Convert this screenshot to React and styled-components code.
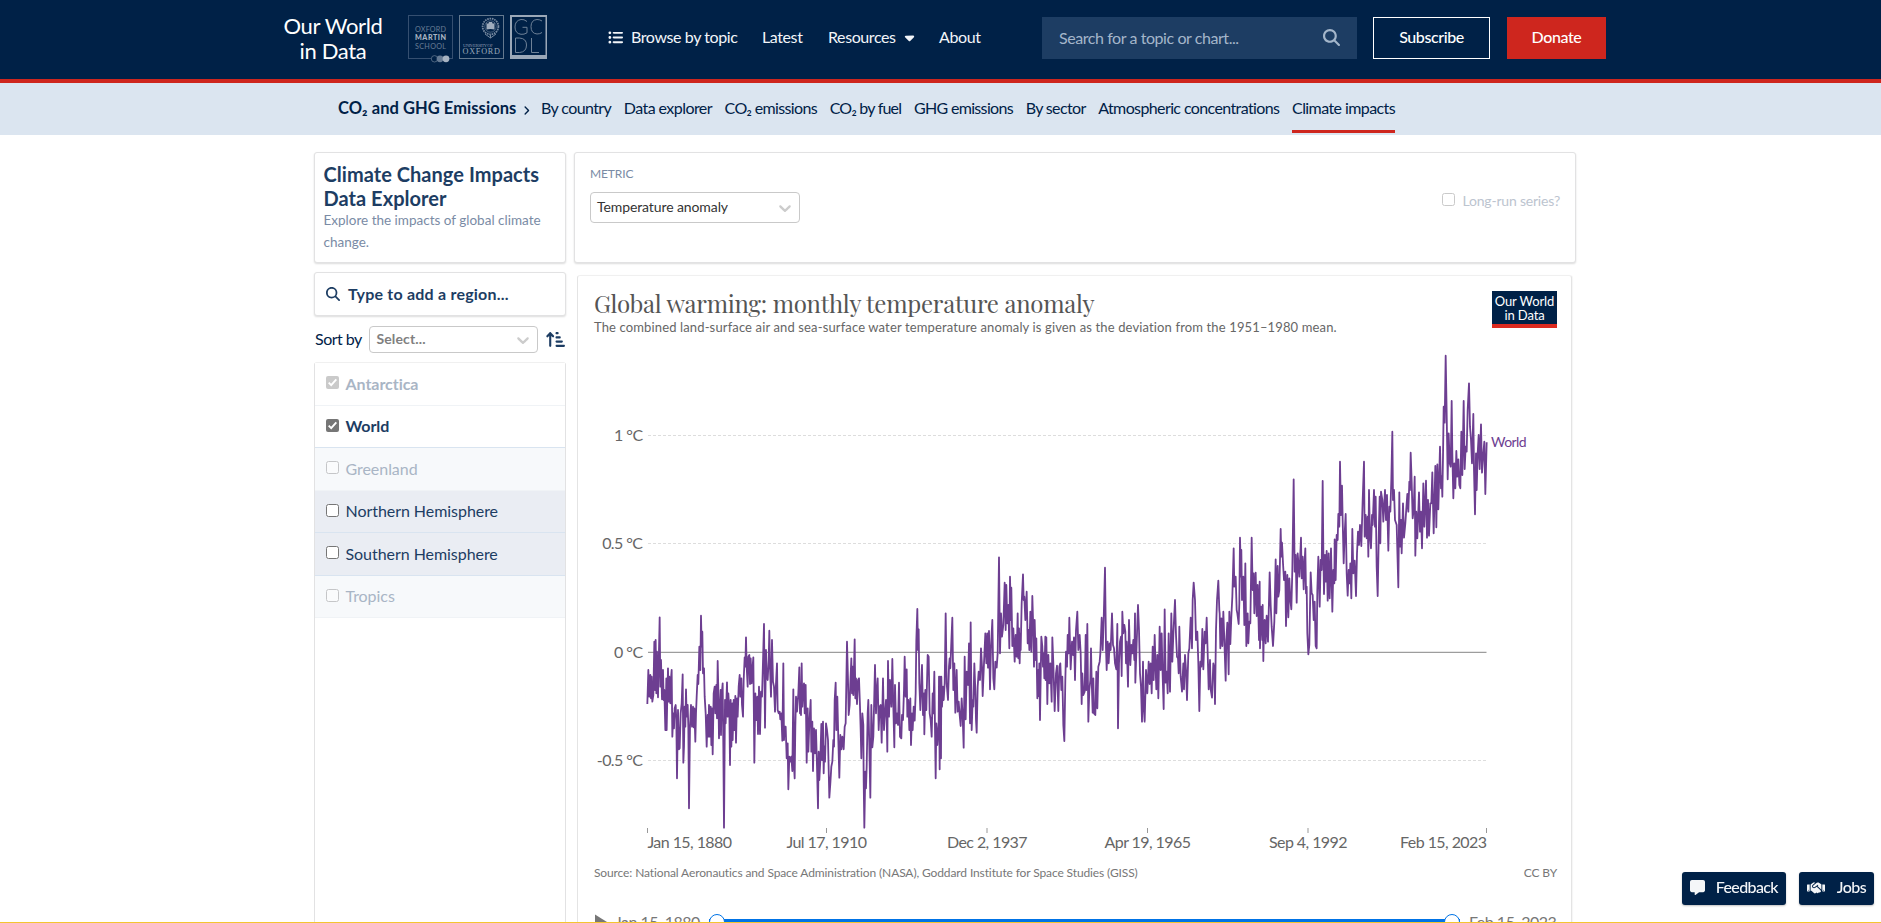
import React from "react";
import styled, { createGlobalStyle, css } from "styled-components";
import {
  FaListUl,
  FaCaretDown,
  FaMagnifyingGlass,
  FaAngleRight,
  FaArrowUpShortWide,
  FaMessage,
  FaHandshake,
} from "react-icons/fa6";

const GlobalStyle = createGlobalStyle`
  *, *::before, *::after { box-sizing: border-box; }
  body {
    margin: 0;
    height: 923px;
    overflow: hidden;
    background: #fff;
    color: #002147;
    font-family: Lato, "Liberation Sans", sans-serif;
    font-size: 16px;
  }
`;

const Page = styled.div`
  height: 923px;
  overflow: hidden;
`;

/* ---------- header ---------- */

const Header = styled.header`
  height: 83px;
  padding: 0 275px 0 283px;
  display: flex;
  align-items: flex-start;
  background: #002147;
  border-bottom: 4px solid #ce261e;
  color: #fff;
`;

const SiteLogo = styled.div`
  width: 100px;
  margin-top: 13px;
  text-align: center;
  font-size: 22px;
  line-height: 25px;
  letter-spacing: -0.35px;
  white-space: nowrap;
`;

const Partners = styled.svg`
  display: block;
  margin: 13px 0 0 24px;
  flex: none;
`;

const MainNav = styled.nav`
  display: flex;
  align-items: center;
  height: 40px;
  margin: 17px 0 0 60px;
  line-height: 20px;
  letter-spacing: -0.4px;
  color: #f2f5f9;
`;

const MainLink = styled.a`
  display: flex;
  align-items: center;
  width: ${(p) => p.$width}px;
  white-space: nowrap;
  svg { flex: none; }
`;

const ListIcon = styled(FaListUl)`
  margin-right: 8px;
`;

const CaretIcon = styled(FaCaretDown)`
  margin-left: 6px;
`;

const SearchBox = styled.div`
  display: flex;
  align-items: center;
  justify-content: space-between;
  width: 315px;
  height: 42px;
  margin: 17px 16px 0 auto;
  padding: 0 17px 2px 17px;
  background: #1d3d63;
  color: #a4b6ca;
  letter-spacing: -0.43px;
`;

const HeaderButton = styled.button`
  width: ${(p) => p.$width}px;
  height: 42px;
  margin: 17px 0 0 ${(p) => p.$gap}px;
  padding: 0 0 3px;
  border: 1px solid ${(p) => (p.$filled ? "#ce261e" : "#fff")};
  background: ${(p) => (p.$filled ? "#ce261e" : "transparent")};
  color: #fff;
  font: 500 16px Lato, sans-serif;
  letter-spacing: -0.4px;
`;

/* ---------- topic navigation ---------- */

const TopicNav = styled.nav`
  display: flex;
  align-items: stretch;
  height: 52px;
  padding-left: 338px;
  background: #dbe5f0;
  line-height: 50px;
`;

const TopicTitle = styled.div`
  display: flex;
  align-items: center;
  width: 203px;
  height: 50px;
  font-size: 16.5px;
  font-weight: 700;
  letter-spacing: 0.05px;
  white-space: nowrap;
  svg { margin: 4px 0 0 5px; }
`;

const TopicLink = styled.a`
  margin-right: 12.65px;
  height: 50px;
  font-size: 16px;
  letter-spacing: ${(p) => p.$track}px;
  white-space: nowrap;
  border-bottom: 3px solid ${(p) => (p.$active ? "#ce261e" : "transparent")};
`;

/* ---------- explorer ---------- */

const Explorer = styled.main`
  display: grid;
  grid-template-columns: 252px 1002px;
  grid-template-rows: 111px 1fr;
  column-gap: 8px;
  row-gap: 9px;
  height: 788px;
  padding: 17px 0 0 314px;
`;

const card = css`
  background: #fff;
  border: 1px solid #e2e2e3;
  border-radius: 3px;
  box-shadow: 0 1px 2px rgba(0, 0, 0, 0.14);
`;

const TitleCard = styled.section`
  ${card}
  padding: 9px 8.5px;
`;

const ExplorerTitle = styled.h1`
  margin: 0;
  color: #1d3d63;
  font-size: 20px;
  font-weight: 700;
  line-height: 24px;
  letter-spacing: 0.04px;
  white-space: nowrap;
`;

const ExplorerSubtitle = styled.p`
  margin: -1px 0 0;
  color: #7a8ba5;
  font-size: 13.5px;
  line-height: 22px;
`;

const MetricCard = styled.section`
  ${card}
  display: flex;
  justify-content: space-between;
  padding: 13px 15px;
`;

const MetricLabel = styled.div`
  color: #7a8ba5;
  font-size: 12px;
  line-height: 16px;
  letter-spacing: -0.1px;
`;

const Select = styled.div`
  display: flex;
  align-items: center;
  justify-content: space-between;
  width: ${(p) => p.$width}px;
  height: ${(p) => p.$height}px;
  padding: 0 4px 0 6px;
  border: 1px solid #c9c9c9;
  border-radius: 4px;
  color: ${(p) => (p.$placeholder ? "#808080" : "#333")};
  font-size: 14px;
  font-weight: ${(p) => (p.$placeholder ? 700 : 400)};
  letter-spacing: ${(p) => (p.$placeholder ? 0.15 : -0.1)}px;
  span { padding-bottom: 2px; }
`;

const MetricSelect = styled(Select)`
  margin-top: 10px;
`;

const LongRun = styled.label`
  display: flex;
  align-items: center;
  gap: 8px;
  height: 20px;
  margin-top: 23px;
  color: #bcc4cf;
  font-size: 14px;
  letter-spacing: -0.2px;
  span { padding-top: 2px; }
`;

const Checkbox = styled.svg`
  display: block;
  flex: none;
  opacity: ${(p) => (p.$faded ? 0.38 : 1)};
`;

const Sidebar = styled.aside`
  display: flex;
  flex-direction: column;
  color: #1d3d63;
`;

const RegionSearch = styled.div`
  ${card}
  display: flex;
  align-items: center;
  gap: 8px;
  height: 44px;
  padding: 0 11px;
  font-size: 16px;
  font-weight: 700;
  letter-spacing: 0.22px;
  span { padding-bottom: 2px; }
`;

const SortRow = styled.div`
  display: flex;
  align-items: center;
  justify-content: space-between;
  height: 27px;
  margin: 10px 0 9px;
  padding: 0 1px;
  color: #002147;
`;

const SortLabel = styled.span`
  padding-bottom: 2px;
  letter-spacing: -0.5px;
`;

const RegionList = styled.ul`
  flex: 1;
  margin: 0;
  padding: 0;
  list-style: none;
  border: 1px solid #e2e2e3;
  border-top-color: #f0f0f0;
  border-radius: 3px 3px 0 0;
`;

const RegionRow = styled.li`
  display: flex;
  align-items: center;
  gap: 6.5px;
  height: 42.5px;
  padding-left: 11px;
  padding-bottom: 2px;
  background: ${(p) => (p.$on ? "#fff" : p.$off ? "#f7f9fb" : "#eaedf3")};
  border-bottom: 1px solid ${(p) => (p.$off ? "#f0f3f6" : "#d9e4f0")};
  color: ${(p) => (p.$off ? "#a9b5c5" : "#1d3d63")};
  font-weight: ${(p) => (p.$on ? 700 : 400)};
  letter-spacing: -0.05px;
  span { padding-top: 1px; }
`;

/* ---------- chart card ---------- */

const ChartCard = styled.section`
  display: flex;
  flex-direction: column;
  width: 995px;
  margin: 3px 0 0 3px;
  border: 1px solid #e4e4e4;
  border-top-color: #f0f0f0;
  border-bottom: 0;
  border-radius: 3px 3px 0 0;
  box-shadow: 1px 0 1px rgba(0, 0, 0, 0.04);
`;

const ChartHeader = styled.div`
  display: flex;
  justify-content: space-between;
  height: 74px;
  padding: 15px 14px 0 16px;
`;

const ChartTitle = styled.h2`
  margin: -3px 0 0;
  color: #555;
  font: 400 24px/30px "Playfair Display", "Liberation Serif", serif;
  letter-spacing: -0.25px;
  white-space: nowrap;
`;

const ChartSubtitle = styled.p`
  margin: 1px 0 0;
  color: #666;
  font-size: 13px;
  letter-spacing: 0.135px;
  line-height: 17px;
  white-space: nowrap;
`;

const ChartLogo = styled.div`
  width: 65px;
  height: 37px;
  padding-top: 3px;
  background: #002147;
  border-bottom: 4px solid #dc2a20;
  color: #fff;
  font-size: 13px;
  letter-spacing: -0.1px;
  line-height: 14px;
  text-align: center;
`;

const Plot = styled.svg`
  display: block;
  flex: none;
  font-family: Lato, sans-serif;
  letter-spacing: -0.57px;
`;

const SourceRow = styled.div`
  display: flex;
  justify-content: space-between;
  height: 51px;
  padding: 6px 14px 0 16px;
  color: #777;
  font-size: 12px;
  line-height: 18px;
  letter-spacing: -0.12px;
`;

const Timeline = styled.div`
  display: flex;
  align-items: center;
  height: 26px;
  padding: 0 15px 0 15px;
  color: #777;
  line-height: 20px;
  letter-spacing: -0.5px;
  white-space: nowrap;
`;

const TimelineDate = styled.span`
  width: ${(p) => p.$width}px;
  margin-left: ${(p) => p.$gap}px;
`;

const Track = styled.div`
  display: flex;
  align-items: center;
  justify-content: space-between;
  width: 752px;
  height: 16px;
  margin-left: 5px;
  background: linear-gradient(#0073e6, #0073e6) center / 100% 6px no-repeat;
`;

const Handle = styled.i`
  width: 16px;
  height: 16px;
  border: 1px solid #0073e6;
  border-radius: 50%;
  background: #fff;
`;

/* ---------- floating tools ---------- */

const SiteTools = styled.div`
  position: fixed;
  right: 7px;
  bottom: 18px;
  display: flex;
  gap: 13px;
`;

const ToolButton = styled.button`
  display: flex;
  align-items: center;
  justify-content: space-between;
  width: ${(p) => p.$width}px;
  height: 33px;
  padding: 0 8px 2px;
  border: 0;
  border-radius: 3px;
  background: #002147;
  box-shadow: 0 1px 2px rgba(0, 0, 0, 0.25);
  color: #f4f6f8;
  font: 500 16px Lato, sans-serif;
  letter-spacing: -0.6px;
  span { padding-bottom: 2px; }
`;

const NoticeEdge = styled.div`
  position: fixed;
  left: 0;
  right: 0;
  bottom: 0;
  height: 1px;
  background: #f4c430;
`;

const Chevron = () => (
  <svg width="20" height="20" viewBox="0 0 20 20" fill="#ccc">
    <path d="M4.516 7.548c0.436-0.446 1.043-0.481 1.576 0l3.908 3.747 3.908-3.747c0.533-0.481 1.141-0.446 1.574 0 0.436 0.445 0.408 1.197 0 1.615-0.406 0.418-4.695 4.502-4.695 4.502-0.217 0.223-0.502 0.335-0.787 0.335s-0.57-0.112-0.789-0.335c0 0-4.287-4.084-4.695-4.502s-0.436-1.17 0-1.615z" />
  </svg>
);

const Check = ({ checked, faded }) => (
  <Checkbox $faded={faded} width="13" height="13" viewBox="0 0 13 13">
    {checked ? (
      <>
        <rect width="13" height="13" rx="2" fill="#767676" />
        <path d="M2.7 6.7 5.2 9.2 10.3 3.4" fill="none" stroke="#fff" strokeWidth="1.9" />
      </>
    ) : (
      <rect x="0.5" y="0.5" width="12" height="12" rx="2" fill="#fff" stroke="#767676" />
    )}
  </Checkbox>
);

const PartnerLogos = () => (
  <Partners width="141" height="52" viewBox="407 13 141 52" fontFamily="Lato, sans-serif">
    <rect x="408.5" y="15.5" width="44" height="43" fill="none" stroke="#354f70" />
    <g fill="#687d95" fontSize="7.2">
      <text x="415" y="31.5" textLength="31">OXFORD</text>
      <text x="415" y="39.7" textLength="31" fontWeight="900" fill="#a9b5c3">MARTIN</text>
      <text x="415" y="48.5" textLength="31">SCHOOL</text>
    </g>
    <circle cx="434.5" cy="58.8" r="3.2" fill="#002147" stroke="#6b7f97" strokeWidth="0.7" />
    <circle cx="440" cy="58.8" r="3.4" fill="#667b94" />
    <circle cx="446" cy="58.8" r="3.4" fill="#a7b3c2" />
    <rect x="459.5" y="15.5" width="44" height="43" fill="none" stroke="#64798f" />
    <g fill="none" stroke="#75889f">
      <circle cx="490.5" cy="26.5" r="7.9" strokeWidth="1.8" strokeDasharray="1.6 0.8" />
      <circle cx="490.5" cy="26.5" r="5.7" strokeWidth="0.6" />
      <path d="M485 34l5.500 4 5.500-4M490.500 35v3" strokeWidth="1" />
    </g>
    <path d="M486.5 22.5l1.5 1.5 1-2h3l1 2 1.500-1.500v7q-4-1-8 0z" fill="#a0adbd" />
    <g fill="#8293a8" fontFamily="Liberation Serif, serif">
      <text x="463" y="46.8" fontSize="4.8" textLength="30">UNIVERSITY OF</text>
      <text x="462.500" y="54" fontSize="8.2" textLength="37.500" fill="#9aa8b8">OXFORD</text>
    </g>
    <path d="M510 15h37v44h-37zM512 17v38h33.500v-38z" fill="#9ba8b8" fillRule="evenodd" />
    <g fill="none" stroke="#6f8298" strokeWidth="1">
      <path d="M527 21.500q-3-2.500-6-2-6 1-6 7.500t6 7.300q3 .4 6-1.500v-5.500h-4.500" />
      <path d="M542 21q-2-1.500-5-1.500-6 .5-6 7.200t6 7.300q3 0 5-1.500" />
      <path d="M515.500 38v14.500h4q7-.5 7-7.500 0-6.500-7-7zM531.500 38v14.500h7.500" />
    </g>
  </Partners>
);

/* Monthly series, kept in four runs, each with its own origin in the plot and three units to a pixel. */
const runs = [
  {
    x: 640,
    y: 580,
    points:
      "22,372 25,270 28,350 31,285 33,355 35,290 37,365 40,345 43,185 45,330 47,180 49,340 51,215 54,352 59,112 61,320 63,240 66,358 69,270 71,360 73,330 76,450 79,295 80,450 82,350 84,265 86,365 88,290 91,370 93,295 95,270 97,470 100,400 102,445 104,385 107,375 109,420 111,595 114,390 117,508 119,505 122,400 125,370 128,283 130,548 132,500 134,380 136,440 138,328 140,410 143,375 145,440 147,685 150,440 153,375 156,440 159,380 161,442 163,385 166,485 168,400 170,350 173,285 175,312 178,200 181,270 183,107 185,200 187,155 189,280 192,265 194,350 197,400 200,500 203,405 205,470 207,375 209,470 212,380 214,495 216,385 218,523 221,340 224,320 226,400 229,315 231,415 233,243 235,330 237,475 239,400 242,330 243,465 245,345 248,310 250,500 252,743 255,360 257,430 261,307 263,410 265,340 268,390 270,555 272,360 274,500 277,370 278,480 281,360 283,450 286,348 288,488 291,355 293,410 296,320 299,285 301,350 304,295 306,375 309,410 311,300 314,232 316,260 318,172 320,260 323,320 325,230 328,225 330,312 332,235 335,310 337,270 340,232 343,548 346,340 349,420 352,350 354,462 357,320 360,462 363,335 366,350 368,280 372,132 375,443 378,210 380,290 383,300 386,240 388,152 390,260 393,350 396,180 399,305 402,320 405,395 408,310 411,250 413,390 416,400 419,395 421,418 424,400 427,482 430,250 432,480 434,440 437,440 440,535 443,490 445,628 448,530 451,545 454,530 457,573 460,328 462,560 464,595 466,440 468,350 471,395 475,340 478,262 480,400 482,310 483,405 485,250 487,380 489,330 492,310 494,400 497,315 500,548 503,385 505,515 508,430 512,360 514,515 517,425 519,573 522,445 525,520 528,450 531,560 534,685 536,515 538,600 541,540 544,432 546,540 549,425 551,580 553,500 555,545 558,430 561,450 564,480 568,653 571,610 574,560 577,545 580,480 582,500 584,360 587,308 589,450 592,350 595,480 598,593 601,465 604,508 607,470 611,508 614,440 617,430 621,185 624,300 626,405 629,375 631,310 634,235 636,340 638,260 640,345 644,178 646,355 648,295 651,372 654,300 657,295 660,380 662,450 664,535 667,400 670,435 671,600 673,743 676,575 678,625 680,560 683,400 685,360 688,500 691,653 694,375 697,502 700,470 702,385 705,255 708,400 710,340 713,295 716,450 719,380 722,375 725,488 729,295 732,450 735,400 738,360 740,410 742,515 744,243 747,410 750,300 754,380 757,237 760,380 763,502 765,315 768,430 771,400 774,435 777,308 780,470 784,475 786,405 789,420 792,330 794,230 797,350 800,268 802,410 805,360 808,450 811,355 813,495 816,400 818,450 821,380 824,422 827,340 829,180 832,87 834,210 836,148 838,310 841,390 846,255 849,405 852,340 853,463 856,330 859,390 863,225 866,230 869,400 872,420 875,470 878,340 880,400 883,275 885,450 887,595 889,430 892,495 896,430 897,290 899,568",
  },
  {
    x: 920,
    y: 520,
    points:
      "60,470 63,715 64,470 66,560 69,500 71,540 74,490 77,280 80,490 84,540 87,440 89,415 91,445 94,365 97,293 100,510 103,430 106,578 110,450 113,575 116,545 119,585 122,618 125,535 128,590 131,683 134,410 137,598 140,455 144,495 147,370 150,610 152,307 155,630 158,540 160,560 163,430 166,510 168,600 170,638 173,500 176,455 180,480 183,385 186,440 188,528 192,430 196,340 199,430 202,340 204,443 207,333 210,508 213,380 217,300 220,475 223,508 226,425 230,443 233,400 237,112 240,400 243,280 246,350 250,315 254,188 257,330 259,195 262,310 265,255 268,385 270,170 273,300 274,203 277,378 280,325 284,425 287,345 290,410 293,280 295,415 297,325 299,430 301,340 302,390 305,250 309,163 311,240 313,230 316,300 320,215 323,370 326,330 328,390 331,275 334,395 337,228 340,330 342,440 344,300 347,420 349,355 352,535 355,450 356,528 358,430 360,600 364,350 367,380 369,440 371,400 373,475 376,350 377,480 379,352 382,552 385,405 388,490 391,430 395,545 397,352 400,430 404,573 408,460 411,437 415,573 418,440 421,430 424,510 427,470 430,615 433,663 436,480 438,395 441,440 443,345 446,400 448,293 452,448 456,365 459,405 462,352 465,480 468,330 472,275 475,390 479,345 482,400 485,552 487,460 490,525 494,515 497,345 499,510 502,312 505,605 508,510 511,480 513,385 515,480 518,578 520,475 522,580 526,585 529,455 532,565 535,440 539,425 541,400 545,293 548,390 551,300 555,143 558,385 560,450 563,365 566,430 569,370 572,390 576,280 579,375 582,385 585,430 589,448 592,312 594,625 597,430 600,365 603,350 605,468 607,275 610,340 613,315 616,335 618,430 620,365 624,500 627,300 631,435 634,375 637,400 640,360 643,420 645,280 646,488 650,370 654,255 657,330 660,460 663,500 666,605 669,425 671,560 674,605 678,450 682,520 686,425 689,492 692,430 695,520 698,380 701,480 704,345 707,450 709,508 712,405 715,535 719,320 722,450 725,340 727,435 731,567 734,268 737,488 740,455 743,520 746,340 750,515 754,280 757,425 760,345 765,240 768,345 771,410 774,415 776,460 778,320 782,470 786,515 790,430 792,508 795,405 798,450 801,540 805,400 808,385 812,293 816,385 818,240 821,188 825,240 828,360 832,335 835,430 838,573 841,425 844,440 847,327 850,448 854,335 857,370 860,293 863,400 866,508 870,420 872,508 876,533 880,430 883,445 885,552 888,330 891,240 895,182 898,270",
  },
  {
    x: 1180,
    y: 440,
    points:
      "119,520 121,625 124,535 127,618 130,515 133,600 137,722 139,600 142,548 146,703 148,515 151,612 154,530 157,470 161,325 163,440 167,410 170,510 172,520 176,552 178,490 180,293 183,410 184,330 186,480 190,410 193,555 196,370 199,618 203,520 205,610 208,545 211,550 215,293 218,450 221,400 223,520 227,398 230,528 233,435 237,600 239,425 240,625 243,500 247,600 248,495 250,663 252,560 254,540 257,610 260,527 264,605 269,397 272,495 275,560 279,618 283,545 287,358 289,520 293,378 295,470 298,450 302,267 304,350 306,308 309,370 312,420 316,395 318,558 322,405 325,532 328,415 331,480 334,508 337,390 341,118 344,395 347,345 350,488 353,340 356,380 358,410 363,293 365,415 368,350 371,448 374,360 376,325 378,460 380,440 382,580 385,643 388,615 392,397 395,460 398,465 401,540 404,485 407,618 410,625 412,450 415,350 419,500 422,360 425,390 428,123 430,330 432,462 435,345 438,425 440,333 443,482 446,340 449,475 453,325 457,515 460,390 463,430 464,298 467,420 470,285 473,300 475,222 478,260 480,65 483,225 486,137 488,240 491,370 494,280 497,222 500,400 503,467 506,390 509,430 511,370 514,475 517,267 520,400 524,362 528,468 531,340 534,275 537,315 540,255 544,318 548,180 552,65 554,290 557,225 560,295 563,230 565,350 567,150 570,290 573,325 576,225 578,255 582,150 585,260 587,170 590,380 593,468 597,250 599,170 601,310 603,155 607,180 610,245 615,150 618,240 621,165 625,332 628,200 631,215 634,120",
  },
  {
    x: 1340,
    y: 270,
    points:
      "157,485 159,690 162,660 165,750 170,765 172,840 175,952 178,667 180,830 183,750 185,850 189,700 192,803 196,760 198,730 202,672 205,725 208,635 210,660 212,548 215,635 218,745 221,720 224,620 226,857 229,725 232,805 237,667 240,785 243,725 246,835 250,640 253,770 258,632 261,803 264,690 267,797 271,700 274,700 277,607 281,790 286,588 289,772 292,583 295,718 300,530 303,655 305,620 307,680 309,560 311,410 314,458 317,257 320,430 323,628 326,490 329,580 332,590 335,393 337,550 340,685 343,580 346,655 349,543 352,620 355,568 358,645 361,655 364,485 367,615 371,393 374,597 377,530 380,545 383,420 387,340 390,470 393,510 396,580 400,432 402,600 405,733 408,550 410,660 413,550 416,495 419,597 423,463 426,608 430,550 433,515 436,672 440,517",
  },
];

const linePoints = runs
  .flatMap((run) =>
    run.points.split(" ").map((pair) => {
      const [x, y] = pair.split(",").map(Number);
      return `${(run.x + x / 3).toFixed(2)},${(run.y + y / 3).toFixed(2)}`;
    })
  )
  .join(" ");

const yTicks = [
  { label: "1 °C", y: 435.5 },
  { label: "0.5 °C", y: 543.5 },
  { label: "0 °C", y: 652.3, zero: true },
  { label: "-0.5 °C", y: 760.5 },
];

const xTicks = [
  { label: "Jan 15, 1880", x: 647.5, anchor: "start" },
  { label: "Jul 17, 1910", x: 826.5, anchor: "middle" },
  { label: "Dec 2, 1937", x: 987, anchor: "middle" },
  { label: "Apr 19, 1965", x: 1147.5, anchor: "middle" },
  { label: "Sep 4, 1992", x: 1308, anchor: "middle" },
  { label: "Feb 15, 2023", x: 1486.5, anchor: "end" },
];

const LineChart = () => (
  <Plot width="993" height="508" viewBox="578 350 993 508">
    {yTicks.map((t) => (
      <g key={t.label}>
        <line
          x1="648"
          x2="1486.5"
          y1={t.y}
          y2={t.y}
          stroke={t.zero ? "#858585" : "#ddd"}
          strokeDasharray={t.zero ? undefined : "3,2"}
        />
        <text x="642.5" y={t.y + 5.3} textAnchor="end" fontSize="16" fill="#666">
          {t.label}
        </text>
      </g>
    ))}
    {xTicks.map((t) => (
      <g key={t.label}>
        <line x1={t.x} x2={t.x} y1="828" y2="833" stroke="#999" />
        <text x={t.x} y="847.8" textAnchor={t.anchor} fontSize="16" fill="#666">
          {t.label}
        </text>
      </g>
    ))}
    <polyline points={linePoints} fill="none" stroke="#6d3e91" strokeWidth="1.8" strokeLinejoin="round" />
    <text x="1491" y="447" fontSize="14" fill="#6d3e91" letterSpacing="-0.57">
      World
    </text>
  </Plot>
);

const topics = [
  { name: "By country", track: -0.6 },
  { name: "Data explorer", track: -0.57 },
  { name: "CO₂ emissions", track: -0.64 },
  { name: "CO₂ by fuel", track: -0.78 },
  { name: "GHG emissions", track: -0.67 },
  { name: "By sector", track: -0.64 },
  { name: "Atmospheric concentrations", track: -0.61 },
  { name: "Climate impacts", track: -0.58, active: true },
];

const regions = [
  { name: "Antarctica", on: true, off: true },
  { name: "World", on: true },
  { name: "Greenland", off: true },
  { name: "Northern Hemisphere" },
  { name: "Southern Hemisphere" },
  { name: "Tropics", off: true },
];

export default function App() {
  return (
    <Page>
      <GlobalStyle />
      <Header>
        <SiteLogo>
          Our World
          <br />
          in Data
        </SiteLogo>
        <PartnerLogos />
        <MainNav>
          <MainLink $width={154}>
            <ListIcon size={15} />
            Browse by topic
          </MainLink>
          <MainLink $width={66}>Latest</MainLink>
          <MainLink $width={111}>
            Resources
            <CaretIcon size={15} />
          </MainLink>
          <MainLink $width={45}>About</MainLink>
        </MainNav>
        <SearchBox>
          Search for a topic or chart...
          <FaMagnifyingGlass size={17} />
        </SearchBox>
        <HeaderButton $width={117} $gap={0}>Subscribe</HeaderButton>
        <HeaderButton $width={99} $gap={17} $filled>Donate</HeaderButton>
      </Header>

      <TopicNav>
        <TopicTitle>
          CO₂ and GHG Emissions
          <FaAngleRight size={11} />
        </TopicTitle>
        {topics.map((t) => (
          <TopicLink key={t.name} $track={t.track} $active={t.active}>
            {t.name}
          </TopicLink>
        ))}
      </TopicNav>

      <Explorer>
        <TitleCard>
          <ExplorerTitle>
            Climate Change Impacts
            <br />
            Data Explorer
          </ExplorerTitle>
          <ExplorerSubtitle>Explore the impacts of global climate change.</ExplorerSubtitle>
        </TitleCard>

        <MetricCard>
          <div>
            <MetricLabel>METRIC</MetricLabel>
            <MetricSelect $width={210} $height={31}>
              <span>Temperature anomaly</span>
              <Chevron />
            </MetricSelect>
          </div>
          <LongRun>
            <Check faded />
            <span>Long-run series?</span>
          </LongRun>
        </MetricCard>

        <Sidebar>
          <RegionSearch>
            <FaMagnifyingGlass size={14} />
            <span>Type to add a region...</span>
          </RegionSearch>
          <SortRow>
            <SortLabel>Sort by</SortLabel>
            <Select $width={169} $height={27} $placeholder>
              <span>Select...</span>
              <Chevron />
            </Select>
            <FaArrowUpShortWide size={19} color="#1d3d63" />
          </SortRow>
          <RegionList>
            {regions.map((r) => (
              <RegionRow key={r.name} $on={r.on} $off={r.off}>
                <Check checked={r.on} faded={r.off} />
                <span>{r.name}</span>
              </RegionRow>
            ))}
          </RegionList>
        </Sidebar>

        <ChartCard>
          <ChartHeader>
            <div>
              <ChartTitle>Global warming: monthly temperature anomaly</ChartTitle>
              <ChartSubtitle>
                The combined land-surface air and sea-surface water temperature anomaly is given as the deviation from
                the 1951–1980 mean.
              </ChartSubtitle>
            </div>
            <ChartLogo>
              Our World
              <br />
              in Data
            </ChartLogo>
          </ChartHeader>
          <LineChart />
          <SourceRow>
            <span>
              Source: National Aeronautics and Space Administration (NASA), Goddard Institute for Space Studies (GISS)
            </span>
            <span>CC BY</span>
          </SourceRow>
          <Timeline>
            <svg width="14" height="16" viewBox="0 0 14 16" fill="#777">
              <path d="M2 0.500 14 8 2 15.500z" />
            </svg>
            <TimelineDate $gap={8} $width={89}>Jan 15, 1880</TimelineDate>
            <Track>
              <Handle />
              <Handle />
            </Track>
            <TimelineDate $gap={9} $width={87}>Feb 15, 2023</TimelineDate>
          </Timeline>
        </ChartCard>
      </Explorer>

      <SiteTools>
        <ToolButton $width={104}>
          <FaMessage size={15} />
          <span>Feedback</span>
        </ToolButton>
        <ToolButton $width={75}>
          <FaHandshake size={18} />
          <span>Jobs</span>
        </ToolButton>
      </SiteTools>
      <NoticeEdge />
    </Page>
  );
}
